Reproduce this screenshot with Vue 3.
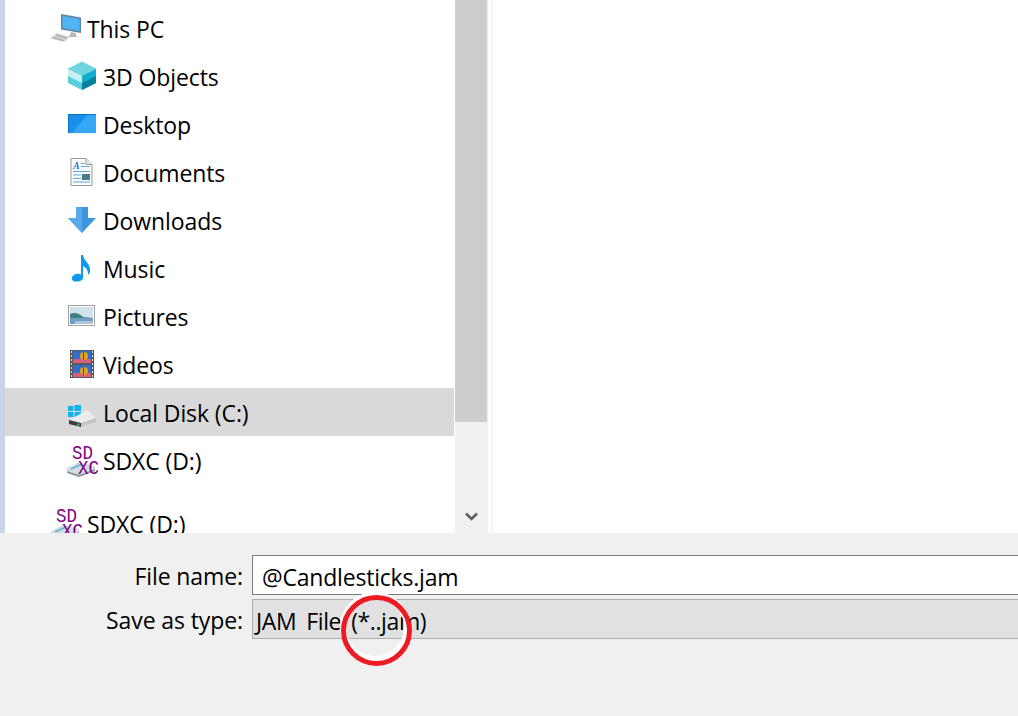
<script setup>
const rows = [
  { label: 'This PC', icon: 'pc', level: 0 },
  { label: '3D Objects', icon: 'cube', level: 1 },
  { label: 'Desktop', icon: 'desktop', level: 1 },
  { label: 'Documents', icon: 'docs', level: 1 },
  { label: 'Downloads', icon: 'down', level: 1 },
  { label: 'Music', icon: 'music', level: 1 },
  { label: 'Pictures', icon: 'pics', level: 1 },
  { label: 'Videos', icon: 'video', level: 1 },
  { label: 'Local Disk (C:)', icon: 'disk', level: 1, selected: true },
  { label: 'SDXC (D:)', icon: 'sd', level: 1 },
  { label: 'SDXC (D:)', icon: 'sd', level: 0, section: true }
]
</script>

<template>
  <div class="dialog">
    <div class="browser">
      <div class="strip"></div>
      <div class="tree">
        <div v-for="(r, i) in rows" :key="i" class="row"
          :class="{ selected: r.selected, sub: r.level === 1, section: r.section }">
          <svg class="icon" viewBox="0 0 32 32" width="32" height="32">
            <template v-if="r.icon === 'pc'">
              <path d="M10 2 L30 5.500 V21 L10 17.500 Z" fill="#5f87a8"/>
              <path d="M11.500 4 L28.500 7 V19 L11.500 16 Z" fill="#4fb4f4"/>
              <path d="M20 20 L25 21 V24 L27 25 L18 25 Z" fill="#b4b8bc"/>
              <path d="M6 21 L19 25 L13 30 L-1 26.500 Z" fill="#d2d2d2"/>
              <path d="M5 23 L15 26 M2 25.500 L12 28.500" stroke="#a5a5a5" stroke-width="1.200"/>
            </template>
            <template v-else-if="r.icon === 'cube'">
              <g transform="translate(0 1)">
                <path d="M15 1 L29 8 L15 15 L1 8 Z" fill="#6fd6e0" stroke="#6fd6e0" stroke-linejoin="round"/>
                <path d="M1 8 L15 15 V29 L1 22 Z" fill="#c8eff2"/>
                <path d="M29 8 L15 15 V29 L29 22 Z" fill="#0fb0cf"/>
                <path d="M15 22 V29 L29 22 V15 Z" fill="#0a7f9c"/>
                <path d="M1 15 L15 22 V29 L1 22 Z" fill="#58cfdb"/>
              </g>
            </template>
            <template v-else-if="r.icon === 'desktop'">
              <g transform="translate(0 3)">
                <rect x="1" y="3" width="28" height="20" fill="#1a8ee8"/>
                <path d="M5 22 L20 4 H29 V22 Z" fill="#35a7f7"/>
                <path d="M1 3 H29 V4 H2 V22 H1 Z" fill="#0b72c7"/>
                <path d="M1 22 H29 V23 H1 Z" fill="#dff1fd"/>
              </g>
            </template>
            <template v-else-if="r.icon === 'docs'">
              <g transform="translate(0 2)">
                <path d="M4 0.500 H19 L25 6.500 V27.500 H4 Z" fill="#fdfdfd" stroke="#9a9a9a"/>
                <path d="M19 0.500 V6.500 H25" fill="#e7e7e7" stroke="#9a9a9a"/>
                <text x="6" y="11" class="doc-a">A</text>
                <path d="M14 5.500 H18 M14 8.500 H23 M6 13.500 H23 M6 17 H14 M6 20.500 H14 M6 24 H23" stroke="#5fa6dc"/>
                <rect x="15" y="16" width="8" height="6" fill="#4c7a8c"/>
              </g>
            </template>
            <template v-else-if="r.icon === 'down'">
              <g transform="translate(0 2)">
                <path d="M9 1 H21 V12 H29 L15 27 L1 12 H9 Z" fill="#3f96e0"/>
                <path d="M9 1 H15 V27 L1 12 H9 Z" fill="#58a9ec"/>
              </g>
            </template>
            <template v-else-if="r.icon === 'music'">
              <g transform="translate(0 2)">
                <path d="M14 1 H16 C17 8 24 9 23 18 C22.500 20 21 21 21 20 C21 15 18 13 16 12 V23 C16 27 12 28 8 27.500 C4 27 4 23 7 21 C9 19.500 12 19.500 14 20.500 Z" fill="#0d9aec"/>
              </g>
            </template>
            <template v-else-if="r.icon === 'pics'">
              <g transform="translate(0 2)">
                <rect x="1.500" y="3.500" width="26" height="20" fill="#fff" stroke="#a2a2a2"/>
                <rect x="3" y="5" width="23" height="17" fill="#cfe3ef"/>
                <path d="M3 12 C8 10 12 11 16 15 L26 16 V22 H3 Z" fill="#3f8080"/>
                <path d="M3 16 H26 V22 H3 Z" fill="#6f9cc0"/>
                <path d="M8 19 H26 V22 H8 Z" fill="#a9c6dc"/>
              </g>
            </template>
            <template v-else-if="r.icon === 'video'">
              <rect x="3" y="2" width="24" height="28" fill="#5a5a5a"/>
              <rect x="6" y="3" width="18" height="12" fill="#2f6fd0"/>
              <rect x="6" y="17" width="18" height="12" fill="#2f6fd0"/>
              <rect x="6" y="11" width="18" height="4" fill="#d8607a"/>
              <rect x="6" y="25" width="18" height="4" fill="#d8607a"/>
              <circle cx="17" cy="8" r="4" fill="#e4a21c"/>
              <circle cx="17" cy="23" r="4" fill="#e4a21c"/>
              <path d="M16.500 4 V12 M16.500 19 V27" stroke="#7a3b10"/>
              <path d="M4.500 3 V30 M25.500 3 V30" stroke="#d5d5d5" stroke-dasharray="2 2"/>
            </template>
            <template v-else-if="r.icon === 'disk'">
              <path d="M1 10 H6.500 V15 H1 Z M7.500 9 H14 V15 H7.500 Z M1 16 H6.500 V21 H1 Z M7.500 16 H14 V22 H7.500 Z" fill="#12b4ee"/>
              <path d="M15 17 L20 14 L29 22 V26 L14 31 L2 28 V24 Z" fill="#ececec"/>
              <path d="M2 24 L14 27 L29 22 V26 L14 31 L2 28 Z" fill="#c4c4c4"/>
              <path d="M2 24 L14 27 V31 L2 28 Z" fill="#3c3c3c"/>
              <rect x="10" y="27.500" width="2.500" height="2" fill="#3ac65a"/>
            </template>
            <template v-else>
              <path d="M0 24 L12 18 L28 22 V27 L12 33 L0 29 Z" fill="#d4dde0"/>
              <path d="M0 27 L12 31 L28 25 V27 L12 33 L0 29 Z" fill="#8e979a"/>
              <path d="M4 25 L14 20.500" stroke="#5fb4d8" stroke-width="1.500"/>
              <text transform="translate(5 15) scale(1 1.2)" class="sd-text">SD</text>
              <text transform="translate(11 30) scale(1 1.2)" class="sd-text">XC</text>
            </template>
          </svg>
          <span class="label">{{ r.label }}</span>
        </div>
      </div>
      <div class="scrollbar">
        <div class="thumb"></div>
        <div class="track">
          <svg width="13" height="10" viewBox="0 0 13 10">
            <path d="M1 1.500 L6.500 7 L12 1.500" fill="none" stroke="#606060" stroke-width="2.600"/>
          </svg>
        </div>
      </div>
      <div class="gutter"></div>
      <div class="files"></div>
    </div>

    <div class="form">
      <div class="field">
        <span class="field-label">File name:</span>
        <div class="input">@Candlesticks.jam</div>
      </div>
      <div class="field second">
        <span class="field-label">Save as type:</span>
        <div class="input select">JAM File (*..jam)</div>
      </div>
    </div>

    <svg class="ring" width="100" height="90" viewBox="0 0 100 90">
      <circle cx="45" cy="42" r="32" fill="none" stroke="#fff" stroke-width="6"/>
      <circle cx="46.500" cy="45.500" r="33" fill="none" stroke="#ed1c24" stroke-width="5"/>
    </svg>
  </div>
</template>

<style scoped>
.dialog {
  position: relative;
  width: 1018px;
  height: 716px;
  overflow: hidden;
  background: #f0f0f0;
  font-family: "Open Sans", "Noto Sans", sans-serif;
  color: #000;
  font-size: 23px;
  letter-spacing: -0.1px;
  display: flex;
  flex-direction: column;
}
.browser {
  height: 533px;
  display: flex;
  overflow: hidden;
  background: #fff;
  flex: none;
}
.strip {
  width: 5px;
  background: #c9d5e6;
  flex: none;
}
.tree {
  width: 449px;
  padding-top: 4px;
  flex: none;
}
.row {
  height: 48px;
  display: flex;
  align-items: center;
  padding-left: 46px;
  gap: 4px;
}
.row.sub {
  padding-left: 62px;
}
.row.section {
  margin-top: 15px;
}
.row.selected {
  background: #d9d9d9;
}
.icon {
  flex: none;
  overflow: visible;
}
.label {
  position: relative;
  top: 1px;
  white-space: nowrap;
}
.doc-a {
  font: italic bold 10px "Liberation Serif", serif;
  fill: #1c78c8;
}
.sd-text {
  font: 17.500px "Liberation Mono", monospace;
  fill: #800080;
}
.scrollbar {
  width: 33px;
  margin-left: 1px;
  display: flex;
  flex-direction: column;
  flex: none;
  background: #f0f0f0;
}
.thumb {
  height: 422px;
  width: 32px;
  background: #cdcdcd;
}
.track {
  flex: 1;
  display: flex;
  align-items: flex-end;
  justify-content: center;
  padding-bottom: 11px;
}
.gutter {
  width: 2px;
  margin-left: 3px;
  background: #f5f5f5;
  flex: none;
}
.files {
  flex: 1;
  background: #fff;
}
.form {
  padding-top: 22px;
  padding-left: 5px;
}
.field {
  display: flex;
  align-items: center;
  height: 40px;
}
.field.second {
  margin-top: 4px;
}
.field-label {
  width: 247px;
  padding: 2px 9px 0 0;
  text-align: right;
  box-sizing: border-box;
  white-space: nowrap;
}
.input {
  flex: 1;
  height: 40px;
  box-sizing: border-box;
  border: 1px solid #7a7a7a;
  border-right: none;
  background: #fff;
  padding: 2px 0 0 9px;
  line-height: 38px;
  letter-spacing: -0.2px;
}
.select {
  border-color: #adadad;
  background: #e1e1e1;
  padding-left: 3px;
  letter-spacing: -0.4px;
  word-spacing: 4.500px;
}
.ring {
  position: absolute;
  left: 330px;
  top: 585px;
}
</style>
